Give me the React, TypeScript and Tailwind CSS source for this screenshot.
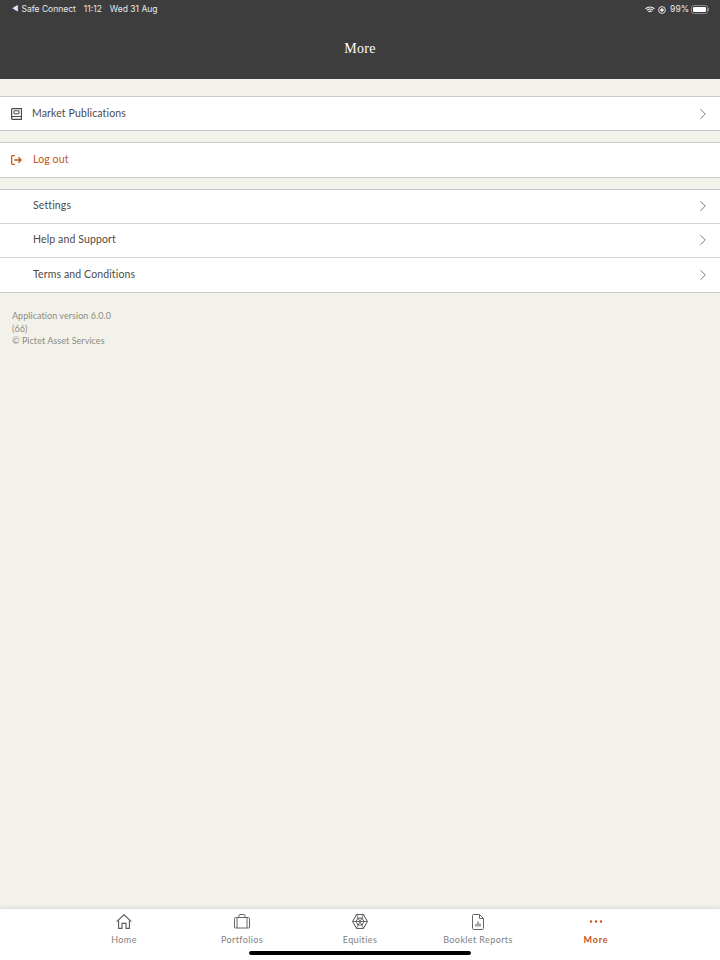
import { ChevronRight } from 'lucide-react'

function BookIcon() {
  return (
    <svg width="11" height="12" viewBox="0 0 11 12" fill="none" stroke="#4a4a4a" strokeWidth="1.200" className="shrink-0">
      <path d="M.6 9.400V1.500a.9.900 0 0 1 .9-.9h9v10.800H1.500a.9.900 0 0 1-.9-.9V9.400a.9.900 0 0 1 .9-.9h9" />
      <path d="M3 2.800h5v3H3z" strokeWidth="1" />
    </svg>
  )
}

function LogoutIcon() {
  return (
    <svg width="11" height="10" viewBox="0 0 11 10" fill="none" stroke="#c8541c" strokeWidth="1.300" className="shrink-0">
      <path d="M3.800.7H1.600a1 1 0 0 0-1 1v6.600a1 1 0 0 0 1 1h2.200" />
      <path d="M3.200 5h7M7.400 2.200 10.200 5 7.400 7.800" />
    </svg>
  )
}

function HomeIcon() {
  return (
    <svg width="16" height="15" viewBox="0 0 16 15" fill="none" stroke="#5a5a5a" strokeWidth="1.100">
      <path d="M.6 7.600 8 .8l7.400 6.800" />
      <path d="M2.600 6.200V14.400h3.400V9.400h4v5h3.400V6.200" />
    </svg>
  )
}

function BriefcaseIcon() {
  return (
    <svg width="16" height="15" viewBox="0 0 16 15" fill="none" stroke="#666" strokeWidth="1">
      <rect x=".5" y="3.500" width="15" height="10.500" rx="1" />
      <path d="M5 3.500V1.500a1 1 0 0 1 1-1h4a1 1 0 0 1 1 1v2M3 3.500V14M13 3.500V14" />
    </svg>
  )
}

function WebIcon() {
  return (
    <svg width="16" height="15" viewBox="0 0 16 15" fill="none" stroke="#505050" strokeWidth="1">
      <path d="M4.500.6h7L15.400 7.500 11.500 14.400h-7L.6 7.500z" />
      <path d="M6 4h4l2 3.500-2 3.500H6L4 7.500z" strokeWidth=".9" />
      <path d="M4.500.6 6 4M11.500.6 10 4M.6 7.500H4M15.400 7.500H12M4.500 14.400 6 11M11.500 14.400 10 11M6 4l4 7M10 4l-4 7M4 7.500h8" strokeWidth=".8" />
    </svg>
  )
}

function ReportIcon() {
  return (
    <svg width="12" height="16" viewBox="0 0 12 16" fill="none" stroke="#666" strokeWidth="1">
      <path d="M7.500.5H1.500a1 1 0 0 0-1 1v13a1 1 0 0 0 1 1h9a1 1 0 0 0 1-1V4.500z" />
      <path d="M7.500.5v4h4" />
      <path d="M4 12.500V10M6 12.500V7.500M8 12.500V9.500" strokeWidth="1.200" />
    </svg>
  )
}

function MoreIcon() {
  return (
    <svg width="14" height="15" viewBox="0 0 14 15" fill="#c8541c">
      <circle cx="2" cy="7.500" r="1.200" />
      <circle cx="7" cy="7.500" r="1.200" />
      <circle cx="12" cy="7.500" r="1.200" />
    </svg>
  )
}

function Row({ label, icon, danger, short }: { label: string; icon?: React.ReactNode; danger?: boolean; short?: boolean }) {
  return (
    <div className={`flex items-center bg-white pr-2 ${short ? 'h-[33px]' : 'h-[34px] pb-[1px]'}`}>
      <div className={`pl-[11px] flex items-center shrink-0 ${short ? 'w-[32px]' : 'w-[33px]'}`}>{icon}</div>
      <span className={`flex-1 text-[10.500px] tracking-[0.130px] ${danger ? 'text-[#c8541c]' : 'text-[#4a4a4a]'}`}>{label}</span>
      {!danger && <ChevronRight size={18} strokeWidth={1.300} className="text-[#777]" />}
    </div>
  )
}

const TABS = [
  { label: 'Home', icon: <HomeIcon /> },
  { label: 'Portfolios', icon: <BriefcaseIcon /> },
  { label: 'Equities', icon: <WebIcon /> },
  { label: 'Booklet Reports', icon: <ReportIcon /> },
]

export default function App() {
  return (
    <div className="h-[960px] w-[720px] flex flex-col bg-[#f3f2ea] overflow-hidden font-['Lato','Noto_Sans',sans-serif]">
      <header className="h-[79px] bg-[#3d3d3d] shrink-0 flex flex-col">
        {/* Status bar */}
        <div className="h-[18px] pt-[1px] flex items-center justify-between pl-3 pr-[11px] text-[8.500px] text-[#e8e8e8] font-['Inter',sans-serif]">
          <div className="flex items-center">
            <span className="text-[7px] mr-[3px]">◀</span>
            <span>Safe Connect</span>
            <span className="ml-[8px]">11:12</span>
            <span className="ml-[8px]">Wed 31 Aug</span>
          </div>
          <div className="flex items-center gap-[3px]">
            <svg width="10" height="8" viewBox="0 0 10 8" fill="none" stroke="#f0f0f0" strokeWidth="1.200">
              <path d="M.5 2.800a6.500 6.500 0 0 1 9 0M2 4.400a4.300 4.300 0 0 1 6 0M3.500 5.900a2 2 0 0 1 3 0" />
            </svg>
            <svg width="8" height="8" viewBox="0 0 8 8" fill="none" stroke="#f0f0f0" strokeWidth=".9">
              <circle cx="4" cy="4" r="3.400" />
              <circle cx="4" cy="4" r="1.300" fill="#f0f0f0" />
            </svg>
            <span className="ml-[1px]">99%</span>
            <div className="flex items-center ml-[-1px]">
              <div className="w-[17px] h-[9px] rounded-[2.500px] border border-[#8a8a8a] p-[1px] flex">
                <div className="flex-1 bg-white rounded-[1px]" />
              </div>
              <div className="w-[1px] h-[3px] bg-[#8a8a8a]" />
            </div>
          </div>
        </div>
        <div className="flex-1 flex items-center justify-center text-white text-[14px] font-['Liberation_Serif',serif] tracking-[0.300px]">
          More
        </div>
      </header>

      <main className="flex-1 pt-[17px]">
        <section className="border-y border-[#c9c9c5]">
          <Row label="Market Publications" icon={<BookIcon />} short />
        </section>
        <section className="mt-[11px] border-y border-[#c9c9c5]">
          <Row label="Log out" icon={<LogoutIcon />} danger />
        </section>
        <section className="mt-[11px] border-y border-[#c9c9c5] divide-y divide-[#d4d4d1]">
          <Row label="Settings" />
          <Row label="Help and Support" />
          <Row label="Terms and Conditions" />
        </section>
        <div className="pt-[17px] pl-3 text-[9px] leading-[12.600px] text-[#8c8b85] tracking-[0.050px]">
          <p>Application version 6.0.0</p>
          <p>(66)</p>
          <p>© Pictet Asset Services</p>
        </div>
      </main>

      <nav className="relative h-[51px] shrink-0 bg-white shadow-[0_-1px_4px_rgba(0,0,0,0.12)] flex justify-center">
        {TABS.map(tab => (
          <div key={tab.label} className="w-[118px] pt-[5px] flex flex-col items-center">
            <div className="h-[15px] flex items-center">{tab.icon}</div>
            <span className="mt-[5px] text-[9px] leading-[12px] tracking-[0.400px] text-[#808080]">{tab.label}</span>
          </div>
        ))}
        <div className="w-[118px] pt-[5px] flex flex-col items-center">
          <div className="h-[15px] flex items-center"><MoreIcon /></div>
          <span className="mt-[5px] text-[9px] leading-[12px] tracking-[0.800px] font-bold text-[#c8541c]">More</span>
        </div>
        <div className="absolute left-[249px] bottom-[5px] w-[222px] h-[4px] rounded-full bg-black" />
      </nav>
    </div>
  )
}
